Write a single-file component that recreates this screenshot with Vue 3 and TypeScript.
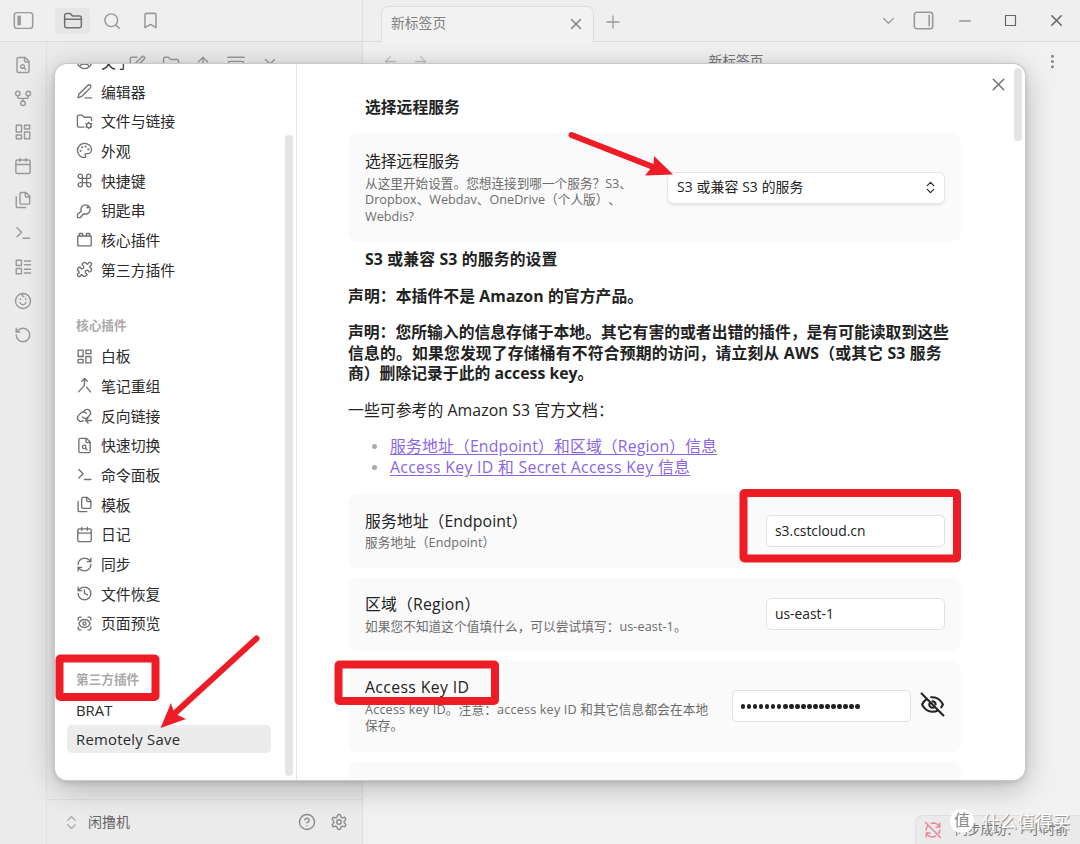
<script setup lang="ts">
import { h, type FunctionalComponent } from 'vue'

interface NavItem { label: string; icon?: string; active?: boolean }
interface NavGroup { title?: string; items: NavItem[] }

const icons: Record<string, string> = {
  panelLeft: '<rect x="1.5" y="3" width="21" height="18" rx="3"/><rect x="5" y="6.5" width="4" height="11" fill="currentColor" stroke="none"/>',
  panelRight: '<rect x="1.5" y="2.5" width="21" height="19" rx="3"/><path d="M18.5 6v12"/>',
  folderOpen: '<path d="M4 20h16a2 2 0 0 0 2-2V8a2 2 0 0 0-2-2h-7.93a2 2 0 0 1-1.66-.9l-.82-1.2A2 2 0 0 0 7.93 3H4a2 2 0 0 0-2 2v13c0 1.1.9 2 2 2Z"/><path d="M2 10h20"/>',
  folder: '<path d="M4 20h16a2 2 0 0 0 2-2V8a2 2 0 0 0-2-2h-7.93a2 2 0 0 1-1.66-.9l-.82-1.2A2 2 0 0 0 7.93 3H4a2 2 0 0 0-2 2v13c0 1.1.9 2 2 2Z"/>',
  search: '<circle cx="11" cy="11" r="8.5"/><path d="m21.5 21.5-4.3-4.3"/>',
  bookmark: '<path d="m19 21-7-4-7 4V5a2 2 0 0 1 2-2h10a2 2 0 0 1 2 2v16z"/>',
  fileSearch: '<path d="M15 2H6a2 2 0 0 0-2 2v16a2 2 0 0 0 2 2h12a2 2 0 0 0 2-2V7Z"/><path d="M14 2v4a2 2 0 0 0 2 2h4"/><circle cx="11.5" cy="14" r="2.5"/><path d="m13.3 15.8 2.2 2.2"/>',
  graph: '<circle cx="12" cy="19" r="3"/><circle cx="5" cy="6" r="3"/><circle cx="19" cy="6" r="3"/><path d="M19 9v1.5a2 2 0 0 1-2 2H7a2 2 0 0 1-2-2V9M12 12.500v3.500"/>',
  board: '<rect x="3" y="3" width="7" height="9"/><rect x="14" y="3" width="7" height="5"/><rect x="14" y="12" width="7" height="9"/><rect x="3" y="16" width="7" height="5"/>',
  calendar: '<rect x="2.500" y="4" width="19" height="18" rx="2"/><path d="M16 2v4M8 2v4M3 10h18"/>',
  files: '<path d="M21 8h-4a2 2 0 0 1-2-2V2"/><path d="M10 17.500a2 2 0 0 1-2-2V4a2 2 0 0 1 2-2h6l5 5v8.500a2 2 0 0 1-2 2Z"/><path d="M3 7.600v12.800A1.600 1.600 0 0 0 4.600 22h10.800"/>',
  terminal: '<path d="m4 17 6-6-6-6M12 19h9"/>',
  layoutList: '<rect x="3" y="3" width="7" height="7"/><rect x="3" y="14" width="7" height="7"/><path d="M14 4h8M14 9h8M14 15h8M14 20h8"/>',
  smile: '<circle cx="12" cy="12" r="10"/><path d="M8.500 9v1M15.500 9v1M8 14c1 2 2.500 3 4 3s3-1 4-3M12 2c-2 2-1 4 1 4"/>',
  undo: '<path d="M3 12a9 9 0 1 0 9-9 9.750 9.750 0 0 0-6.740 2.740L3 8"/><path d="M3 3v5h5"/>',
  edit: '<path d="M12 3H5a2 2 0 0 0-2 2v14a2 2 0 0 0 2 2h14a2 2 0 0 0 2-2v-7"/><path d="M18.500 2.500a2.120 2.120 0 0 1 3 3L12 15l-4 1 1-4Z"/>',
  up: '<path d="m6 9 6-6 6 6M12 3v18"/>',
  collapse: '<path d="M1 3h22"/><rect x="2" y="8.500" width="20" height="12" rx="2"/>',
  arrowLeft: '<path d="m12 19-7-7 7-7M19 12H5"/>',
  arrowRight: '<path d="M5 12h14M12 5l7 7-7 7"/>',
  user: '<circle cx="12" cy="12" r="10"/><path d="M6 18c2-3 10-3 12 0"/>',
  pen: '<path d="M13 21h9M16.500 3.500a2.120 2.120 0 0 1 4 3L8 19l-5 2 1-5Z"/>',
  folderCog: '<path d="M11 20H4a2 2 0 0 1-2-2V5c0-1.100.9-2 2-2h3.900a2 2 0 0 1 1.700.9l.8 1.200a2 2 0 0 0 1.700.9H20a2 2 0 0 1 2 2v2.500"/><circle cx="18" cy="17.500" r="3.200"/><path d="M18 13v1.300M18 20.700V22M14 15.200l1.200.7M20.800 19.100l1.200.7M14 19.800l1.200-.7M20.800 15.900l1.200-.7"/>',
  palette: '<circle cx="13.500" cy="6.500" r=".6"/><circle cx="17.500" cy="10.500" r=".6"/><circle cx="8.500" cy="7.500" r=".6"/><circle cx="6.500" cy="12.500" r=".6"/><path d="M12 2C6.500 2 2 6.500 2 12s4.500 10 10 10c.93 0 1.650-.75 1.650-1.690 0-.44-.18-.84-.44-1.130-.29-.29-.44-.65-.44-1.120a1.640 1.640 0 0 1 1.670-1.670h2c3.050 0 5.560-2.500 5.560-5.550C21.970 6.010 17.460 2 12 2z"/>',
  command: '<path d="M15 6v12a3 3 0 1 0 3-3H6a3 3 0 1 0 3 3V6a3 3 0 1 0-3 3h12a3 3 0 1 0-3-3"/>',
  key: '<path d="M2.600 17.400A2 2 0 0 0 2 18.800V21a1 1 0 0 0 1 1h3a1 1 0 0 0 1-1v-1h1a1 1 0 0 0 1-1v-1h.2a2 2 0 0 0 1.400-.6l.8-.8a6.500 6.500 0 1 0-4-4Z"/><circle cx="16.500" cy="7.500" r=".8"/>',
  plugin: '<rect x="2.500" y="7" width="19" height="14" rx="1"/><path d="M4.500 7V4.500a1 1 0 0 1 1-1h3a1 1 0 0 1 1 1V7M14.500 7V4.500a1 1 0 0 1 1-1h3a1 1 0 0 1 1 1V7"/>',
  puzzle: '<path d="M19.440 7.850c-.05.32.06.65.29.88l1.570 1.570c.47.47.7 1.090.7 1.700s-.23 1.230-.7 1.700l-1.610 1.620a.98.98 0 0 1-.84.27c-.47-.07-.8-.48-.97-.93a2.500 2.500 0 1 0-3.210 3.220c.44.16.85.49.92.96a.98.98 0 0 1-.28.84l-1.610 1.610A2.400 2.400 0 0 1 12 22a2.400 2.400 0 0 1-1.700-.7l-1.570-1.570a1.030 1.030 0 0 0-.88-.29c-.49.07-.84.5-1.020.97a2.500 2.500 0 1 1-3.240-3.240c.46-.18.9-.53.970-1.020a1.030 1.030 0 0 0-.29-.88L2.700 13.700A2.400 2.400 0 0 1 2 12c0-.62.24-1.230.7-1.700l1.530-1.530c.24-.24.58-.35.92-.3.51.08.88.53 1.070 1.010a2.500 2.500 0 1 0 3.260-3.260c-.48-.19-.93-.56-1.010-1.070-.05-.34.06-.68.3-.92L10.300 2.700A2.400 2.400 0 0 1 12 2c.62 0 1.230.24 1.700.7l1.570 1.570c.23.23.56.34.88.29.49-.07.84-.5 1.020-.97a2.500 2.500 0 1 1 3.240 3.240c-.46.18-.9.53-.97 1.020Z"/>',
  merge: '<path d="m8 6 4-4 4 4M12 2v8.300a4 4 0 0 1-1.200 2.900L3.500 21M20.500 21l-5.500-6.500"/>',
  backlink: '<path d="M9 14a5 5 0 0 0 7.500.5l3-3a5 5 0 0 0-7-7L11 6"/><path d="M14.500 9a5 5 0 0 0-7.500-.5l-3 3A5 5 0 0 0 9 20l1.500-.5M22 19h-8M17 15.500 13.500 19l3.500 3.500"/>',
  sync: '<path d="M3 12a9 9 0 0 1 9-9 9.750 9.750 0 0 1 6.740 2.740L21 8M21 3v5h-5M21 12a9 9 0 0 1-9 9 9.750 9.750 0 0 1-6.740-2.740L3 16M8 16H3v5"/>',
  history: '<path d="M3 12a9 9 0 1 0 9-9 9.750 9.750 0 0 0-6.740 2.740L3 8M3 3v5h5M12 7v5l4 2"/>',
  scanEye: '<path d="M3 7V5a2 2 0 0 1 2-2h2M17 3h2a2 2 0 0 1 2 2v2M21 17v2a2 2 0 0 1-2 2h-2M7 21H5a2 2 0 0 1-2-2v-2M4 12c3.500-7.500 12.500-7.500 16 0-3.500 7.500-12.500 7.500-16 0"/><circle cx="12" cy="12" r="2.200"/>',
  close: '<path d="M18 6 6 18M6 6l12 12"/>',
  plus: '<path d="M4 12h16M12 4v16"/>',
  minus: '<path d="M4 12h16"/>',
  square: '<rect x="4" y="4" width="16" height="16"/>',
  down: '<path d="m5 9 7 7 7-7"/>',
  dots: '<circle cx="12" cy="4.500" r="1.200"/><circle cx="12" cy="12" r="1.200"/><circle cx="12" cy="19.500" r="1.200"/>',
  updown: '<path d="m6 15.500 6 6 6-6M6 8.500l6-6 6 6"/>',
  help: '<circle cx="12" cy="12" r="10"/><path d="M9.090 9a3 3 0 0 1 5.830 1c0 2-3 3-3 3M12 17h.01"/>',
  gear: '<path d="M12.220 2h-.44a2 2 0 0 0-2 2v.18a2 2 0 0 1-1 1.730l-.43.25a2 2 0 0 1-2 0l-.15-.08a2 2 0 0 0-2.730.73l-.22.38a2 2 0 0 0 .73 2.730l.15.1a2 2 0 0 1 1 1.720v.51a2 2 0 0 1-1 1.740l-.15.09a2 2 0 0 0-.73 2.730l.22.38a2 2 0 0 0 2.730.73l.15-.08a2 2 0 0 1 2 0l.43.25a2 2 0 0 1 1 1.730V20a2 2 0 0 0 2 2h.44a2 2 0 0 0 2-2v-.18a2 2 0 0 1 1-1.730l.43-.25a2 2 0 0 1 2 0l.15.08a2 2 0 0 0 2.730-.73l.22-.39a2 2 0 0 0-.73-2.730l-.15-.08a2 2 0 0 1-1-1.740v-.5a2 2 0 0 1 1-1.740l.15-.09a2 2 0 0 0 .73-2.730l-.22-.38a2 2 0 0 0-2.730-.73l-.15.08a2 2 0 0 1-2 0l-.43-.25a2 2 0 0 1-1-1.730V4a2 2 0 0 0-2-2z"/><circle cx="12" cy="12" r="3"/>',
  eyeOff: '<path d="M9.880 9.880a3 3 0 1 0 4.240 4.240M10.730 5.080A10.430 10.430 0 0 1 12 5c7 0 10 7 10 7a13.160 13.160 0 0 1-1.670 2.680M6.610 6.610A13.530 13.530 0 0 0 2 12s3 7 10 7a9.740 9.740 0 0 0 5.390-1.610M1.500 1.500l21 21"/><path d="M12 9a3 3 0 0 1 3 3"/>',
  syncOff: '<path d="M21 8a9 9 0 0 0-11-4.700M21 3v5h-5M3 12a9 9 0 0 1 2-5.500M3 16a9 9 0 0 0 12.500 4.200M3 21v-5h5M21 12a9 9 0 0 1-1.200 4.500M2 2l20 20"/>',
}

const Icon: FunctionalComponent<{ name: string; size?: number; w?: number }> = (p) =>
  h('svg', {
    width: p.size ?? 18, height: p.size ?? 18, viewBox: '0 0 24 24', fill: 'none',
    stroke: 'currentColor', 'stroke-width': p.w ?? 1.9, 'stroke-linecap': 'round', 'stroke-linejoin': 'round',
    innerHTML: icons[p.name],
  })
Icon.props = ['name', 'size', 'w']

const ribbon = ['fileSearch', 'graph', 'board', 'calendar', 'files', 'terminal', 'layoutList', 'smile', 'undo']

const groups: NavGroup[] = [
  { items: [
    { label: '关于', icon: 'user' }, { label: '编辑器', icon: 'pen' }, { label: '文件与链接', icon: 'folderCog' },
    { label: '外观', icon: 'palette' }, { label: '快捷键', icon: 'command' }, { label: '钥匙串', icon: 'key' },
    { label: '核心插件', icon: 'plugin' }, { label: '第三方插件', icon: 'puzzle' },
  ] },
  { title: '核心插件', items: [
    { label: '白板', icon: 'board' }, { label: '笔记重组', icon: 'merge' }, { label: '反向链接', icon: 'backlink' },
    { label: '快速切换', icon: 'fileSearch' }, { label: '命令面板', icon: 'terminal' }, { label: '模板', icon: 'files' },
    { label: '日记', icon: 'calendar' }, { label: '同步', icon: 'sync' }, { label: '文件恢复', icon: 'history' },
    { label: '页面预览', icon: 'scanEye' },
  ] },
  { title: '第三方插件', items: [{ label: 'BRAT' }, { label: 'Remotely Save', active: true }] },
]
</script>

<template>
  <div class="app">
    <header class="titlebar">
      <div class="tb-left">
        <Icon class="i-panel" name="panelLeft" :size="21" :w="1.7" />
        <span class="tool-on"><Icon name="folderOpen" :size="20" :w="1.8" /></span>
        <Icon class="i-search" name="search" :size="18" />
        <Icon name="bookmark" :size="19" />
      </div>
      <div class="tabs">
        <div class="tab"><span>新标签页</span><Icon name="close" :size="18" /></div>
        <Icon class="i-plus" name="plus" :size="18" :w="1.7" />
      </div>
      <div class="win">
        <Icon name="down" :size="17" />
        <Icon name="panelRight" :size="21" :w="1.8" />
        <Icon class="dark" name="minus" :size="16" :w="1.8" />
        <Icon class="dark" name="square" :size="15" />
        <Icon class="dark" name="close" :size="19" />
      </div>
    </header>

    <div class="work">
      <nav class="ribbon"><Icon v-for="n in ribbon" :key="n" :name="n" /></nav>
      <aside class="side">
        <div class="side-tools">
          <Icon name="edit" /><Icon name="folder" /><Icon name="up" /><Icon name="collapse" /><Icon name="close" />
        </div>
        <footer class="vault">
          <Icon class="faint" name="updown" :size="15" :w="2" />
          <span>闲撸机</span>
          <Icon class="tool" name="help" /><Icon class="tool" name="gear" />
        </footer>
      </aside>
      <main class="pane">
        <div class="view-head">
          <span class="arrows"><Icon name="arrowLeft" :size="17" /><Icon name="arrowRight" :size="17" /></span>
          <span class="view-title">新标签页</span>
          <Icon name="dots" :size="17" />
        </div>
        <div class="status"><Icon name="syncOff" :size="18" :w="2" /><span>同步成功：7 小时前</span></div>
      </main>
    </div>

    <section class="modal">
      <nav class="nav">
        <div v-for="(g, gi) in groups" :key="gi" class="group">
          <h3 v-if="g.title">{{ g.title }}</h3>
          <div v-for="it in g.items" :key="it.label" class="item" :class="{ active: it.active }">
            <Icon v-if="it.icon" :name="it.icon" :size="17" :w="1.9" /><span>{{ it.label }}</span>
          </div>
        </div>
        <i class="nav-scroll"></i>
      </nav>
      <div class="content">
        <h2>选择远程服务</h2>
        <div class="card first">
          <div class="info">
            <div class="name">选择远程服务</div>
            <div class="desc">从这里开始设置。您想连接到哪一个服务？S3、<br>Dropbox、Webdav、OneDrive（个人版）、<br>Webdis?</div>
          </div>
          <div class="select"><span>S3 或兼容 S3 的服务</span><Icon name="updown" :size="13" :w="2.2" /></div>
        </div>
        <h2 class="second">S3 或兼容 S3 的服务的设置</h2>
        <p class="bold s1">声明：本插件不是 Amazon 的官方产品。</p>
        <p class="bold">声明：您所输入的信息存储于本地。其它有害的或者出错的插件，是有可能读取到这些<br><span class="s2">信息的。如果您发现了存储桶有不符合预期的访问，请立刻从 AWS（或其它 S3 服务</span><br>商）删除记录于此的 access key。</p>
        <p class="s1">一些可参考的 Amazon S3 官方文档：</p>
        <ul>
          <li><a class="s2">服务地址（Endpoint）和区域（Region）信息</a></li>
          <li><a class="s3">Access Key ID 和 Secret Access Key 信息</a></li>
        </ul>
        <div class="card">
          <div class="info"><div class="name s1">服务地址（Endpoint）</div><div class="desc s1">服务地址（Endpoint）</div></div>
          <div class="field">s3.cstcloud.cn</div>
        </div>
        <div class="card">
          <div class="info"><div class="name s2">区域（Region）</div><div class="desc s1">如果您不知道这个值填什么，可以尝试填写：us-east-1。</div></div>
          <div class="field">us-east-1</div>
        </div>
        <div class="card tall">
          <div class="info"><div class="name s4">Access Key ID</div><div class="desc s2">Access key ID。注意：access key ID 和其它信息都会在本地<br>保存。</div></div>
          <div class="secret">
            <div class="field"><i v-for="n in 20" :key="n" class="dot"></i></div>
            <Icon class="eye" name="eyeOff" :size="25" :w="2" />
          </div>
        </div>
        <div class="card"></div>
      </div>
      <Icon class="modal-close" name="close" :size="21" :w="1.8" />
      <i class="content-scroll"></i>
    </section>

    <div class="brand"><b>值</b><span>什么值得买</span></div>

    <svg class="marks" width="1080" height="844" viewBox="0 0 1080 844">
      <g fill="none" stroke="#ee1c25" stroke-width="8">
        <rect x="59.500" y="658.500" width="96" height="38.500" rx="1" />
        <rect x="743.500" y="493" width="213.500" height="65.500" rx="1" />
        <rect x="338.500" y="664.500" width="156.500" height="36.500" rx="1" />
        <path d="M571.500 135 652 166.500M256.500 638.500 174 714" stroke-width="6" stroke-linecap="round" />
      </g>
      <path d="M673 174.500 654 156 653.500 165 645 175.500ZM160.500 728 171 703 174.500 713.500 186 719Z" fill="#ee1c25" />
    </svg>
  </div>
</template>

<style>
html, body { margin: 0; overflow: hidden; }
</style>

<style scoped>
* { box-sizing: border-box; }
.app { position: relative; width: 1080px; height: 844px; overflow: hidden; display: flex; flex-direction: column; background: #f1f1f1; color: #222; font-family: "Open Sans", "Noto Sans CJK SC", sans-serif; font-size: 14.850px; text-spacing-trim: space-all; }
svg { flex: none; display: block; }
.titlebar { height: 42px; flex: none; display: flex; background: #efefef; border-bottom: 1px solid #dcdcdc; color: #999; }
.tb-left { width: 363px; display: flex; align-items: center; padding-left: 13px; border-right: 1px solid #e0e0e0; }
.tool-on { margin: 0 13px 0 21px; width: 35px; height: 26px; border-radius: 4px; background: #e6e6e6; color: #707070; display: flex; align-items: center; justify-content: center; }
.i-search { margin-right: 20px; }
.tabs { flex: 1; display: flex; padding-left: 18px; }
.tab { width: 213px; height: 36px; margin-top: 6px; border: 1px solid #dfdfdf; border-bottom: 0; border-radius: 7px 7px 0 0; background: #f2f2f2; display: flex; align-items: center; justify-content: space-between; padding: 0 8px 2px 9px; font-size: 13.800px; color: #808080; }
.tab span { margin-top: -3px; }
.i-plus { margin: 13px 0 0 10px; }
.win { display: flex; align-items: center; gap: 24px; padding-right: 14px; }
.win svg:nth-child(2) { margin-left: -8px; margin-right: -1px; }
.win .dark:nth-child(4) { margin: 0 5px 0 6px; }
.dark { color: #666; }
.work { flex: 1; display: flex; min-height: 0; }
.ribbon { width: 47px; background: #ebebeb; border-right: 1px solid #e0e0e0; display: flex; flex-direction: column; align-items: center; gap: 15.750px; padding-top: 13.500px; color: #999; }
.side { width: 316px; background: #ebebeb; border-right: 1px solid #dedede; display: flex; flex-direction: column; justify-content: space-between; color: #999; }
.side-tools { display: flex; gap: 15.500px; padding: 13px 0 0 81px; }
.side-tools svg:nth-child(n+3) { margin-left: -1.500px; margin-right: 1.500px; }
.vault { height: 45px; border-top: 1px solid #dedede; display: flex; align-items: center; padding: 0 14px 0 17px; font-size: 14px; color: #666; }
.vault span { margin: -2px auto 0 9px; }
.vault .tool { margin-left: 14px; color: #8c8c8c; }
.vault .faint { color: #aaa; }
.pane { flex: 1; display: flex; flex-direction: column; justify-content: space-between; }
.view-head { display: flex; justify-content: space-between; align-items: center; height: 38px; padding: 0 19px; color: #888; font-size: 13.800px; }
.arrows { display: flex; gap: 13px; width: 47px; color: #c4c4c4; }
.view-title { color: #777; margin: -2px 0 0 -1px; }
.status { align-self: flex-end; width: 165px; height: 29px; background: #eaeaea; border: 1px solid #e0e0e0; border-width: 1px 0 0 1px; border-radius: 8px 0 0 0; display: flex; align-items: center; gap: 13px; padding-left: 8px; font-size: 12.800px; color: #777; white-space: nowrap; }
.status span { margin-top: -3px; }
.status svg { color: #e58794; }
.modal { position: absolute; left: 55px; top: 64px; width: 970px; height: 716px; border-radius: 12px; background: #fff; display: flex; overflow: hidden; box-shadow: 0 0 0 1px #c8c8c8, 0 2px 6px rgba(0,0,0,.15), 0 5px 30px rgba(0,0,0,.18), 0 12px 30px rgba(0,0,0,.08); }
.nav { position: relative; width: 242px; flex: none; border-right: 1px solid #e6e6e6; padding: 0 25px 0 12px; }
.group { margin-bottom: 26.900px; }
.group:first-child { margin-top: -16.600px; }
.group h3 { margin: 0 0 1.800px; height: 30px; line-height: 30px; padding-left: 9px; font-size: 12.650px; font-weight: 600; color: #aaa; }
.item { height: 28px; margin-bottom: 1.680px; display: flex; align-items: center; gap: 8px; padding-left: 9px; border-radius: 5px; color: #2a2a2a; white-space: nowrap; }
.item svg { color: #707070; margin-top: 1px; }
.active { background: #ececec; letter-spacing: .25px; }
.active span { margin-top: -1px; }
.nav-scroll { position: absolute; right: 3px; top: 71px; width: 8px; height: 641px; border-radius: 4px; background: #e4e4e4; }
.content { width: 664px; padding: 33px 0 0 51px; font-size: 15.820px; line-height: 20.600px; white-space: nowrap; }
h2 { margin: 0 0 0 17px; font-size: 15.820px; line-height: 20px; font-weight: 700; }
.card { width: 613px; height: 74px; margin-bottom: 9.500px; background: #fafafa; border-radius: 10px; padding: 0 16px 0 17px; display: flex; justify-content: space-between; align-items: center; }
.first { height: 109px; margin: 16px 0 7px; }
.tall { height: 91px; }
.tall .info { margin-top: -1.500px; }
.desc { font-size: 12.650px; line-height: 16.400px; color: #6c6c6c; margin-top: 3px; }
.s1 { letter-spacing: .08px; }
.s2 { letter-spacing: .17px; }
.s3 { letter-spacing: .3px; }
.s4 { letter-spacing: .35px; }
.select { width: 276px; height: 30px; margin-right: 1px; background: #fff; border-radius: 5px; box-shadow: 0 0 0 1px #e6e6e6, 0 2px 3px rgba(0,0,0,.12); display: flex; align-items: center; justify-content: space-between; padding: 0 7px 0 9px; font-size: 13.850px; letter-spacing: .13px; }
.second { margin-bottom: 16.500px; letter-spacing: .15px; }
p { margin: 0 0 16px; }
.bold { font-weight: 700; }
ul { margin: 0 0 16px; padding: 0 0 0 42px; list-style: none; }
li { position: relative; }
li::before { content: ""; position: absolute; left: -18px; top: 8px; width: 5px; height: 5px; border-radius: 50%; background: #aaa; }
a { color: #8a65e8; text-decoration: underline; text-underline-offset: 2px; }
.field { width: 179px; height: 32px; background: #fff; border: 1px solid #e2e2e2; border-radius: 5px; padding: 1px 0 0 8px; display: flex; align-items: center; font-size: 13.850px; }
.secret { display: flex; align-items: center; gap: 9px; }
.eye { margin-top: -4px; }
.dot { width: 4.400px; height: 4.400px; border-radius: 50%; background: #222; margin-right: 1.630px; }
.modal-close { position: absolute; left: 933px; top: 10px; color: #777; }
.content-scroll { position: absolute; right: 3px; top: 4px; width: 8px; height: 73px; border-radius: 4px; background: #e4e4e4; }
.brand { position: absolute; left: 950px; top: 809px; display: flex; align-items: center; gap: 8px; font-size: 17.600px; line-height: 24px; color: #fff; text-shadow: 1px 1px 1px #888; white-space: nowrap; }
.brand b { width: 24px; height: 24px; border-radius: 50%; background: #fff; color: #888; font-size: 16px; line-height: 23px; font-weight: 400; text-align: center; text-shadow: none; }
.marks { position: absolute; left: 0; top: 0; pointer-events: none; }
</style>
